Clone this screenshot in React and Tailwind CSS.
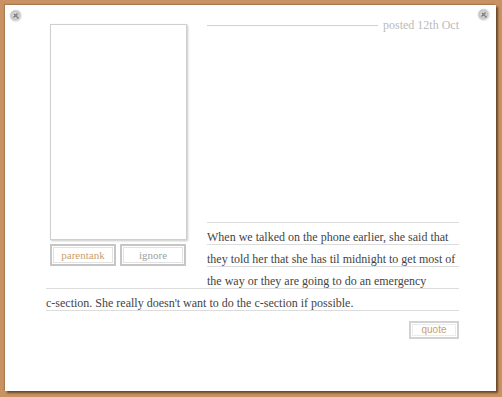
import React from 'react'

function Pin() {
  return (
    <svg width="14" height="14" viewBox="0 0 14 14">
      <defs>
        <radialGradient id="pg" cx="45%" cy="45%" r="55%">
          <stop offset="0%" stopColor="#ededed" />
          <stop offset="60%" stopColor="#c4c4c4" />
          <stop offset="100%" stopColor="#e6e6e6" stopOpacity="0.3" />
        </radialGradient>
      </defs>
      <circle cx="7" cy="7" r="6.5" fill="url(#pg)" />
      <path d="M5 5 L9.5 9.5 M8.5 4.5 L4.5 8.5" stroke="#707070" strokeWidth="1.1" fill="none" />
      <circle cx="7" cy="6.5" r="1.4" fill="#8a8a8a" />
    </svg>
  )
}

function BoxButton({ children, className }) {
  return (
    <button className={`h-[22px] border-2 border-[#c6c6c6] bg-white shadow-[inset_0_0_0_1px_#fff,inset_0_0_0_2px_#e2e2e2] text-[11px] leading-none ${className}`}>
      {children}
    </button>
  )
}

export default function App() {
  return (
    <div className="min-h-[397px] bg-[#c89262] pt-[5px] pl-[5px]">
      <div className="relative w-[491px] h-[386px] bg-white shadow-[2px_2px_2px_rgba(70,45,20,0.75),-1px_-1px_1px_rgba(120,80,40,0.35)] pl-[41px] pr-[37px] pt-[14px] font-['Liberation_Serif',serif]">
        <div className="absolute left-[4px] top-[4px]"><Pin /></div>
        <div className="absolute right-[5px] top-[3px]"><Pin /></div>

        <div className="float-left w-[161px] bg-white pl-[4px] pt-[5px] pb-[14px]">
          <div className="w-[137px] h-[216px] border border-[#cfcfcf] shadow-[1px_1px_2px_#c8c8c8]" />
          <div className="flex gap-[4px] mt-[4px]">
            <BoxButton className="w-[66px] text-[#c9a06c]">parentank</BoxButton>
            <BoxButton className="w-[66px] text-[#a0a0a0]">ignore</BoxButton>
          </div>
        </div>

        <div className="flex items-center h-[12px]">
          <div className="flex-1 h-px bg-[#d0d0d0]" />
          <span className="ml-[5px] text-[12px] text-[#bbbbbb] leading-none">posted 12th Oct</span>
        </div>

        <p className="mt-[191px] pt-[4px] h-[93px] text-[12px] leading-[22px] text-[#444] bg-[linear-gradient(to_bottom,#dcdcdc_1px,transparent_1px)] bg-[length:100%_22px]">
          When we talked on the phone earlier, she said that they told her that she has til midnight to get most of the way or they are going to do an emergency <span className="whitespace-nowrap">c-section.</span> She really doesn't want to do the <span className="whitespace-nowrap">c-section</span> if possible.
        </p>

        <div className="clear-both flex justify-end mt-[6px]">
          <button className="w-[50px] h-[18px] border-2 border-[#d2d2d2] bg-white shadow-[inset_0_0_0_1px_#fff,inset_0_0_0_2px_#ececec] text-[10px] leading-none text-[#c9a06c] font-['Liberation_Sans',sans-serif]">
            quote
          </button>
        </div>
      </div>
    </div>
  )
}
